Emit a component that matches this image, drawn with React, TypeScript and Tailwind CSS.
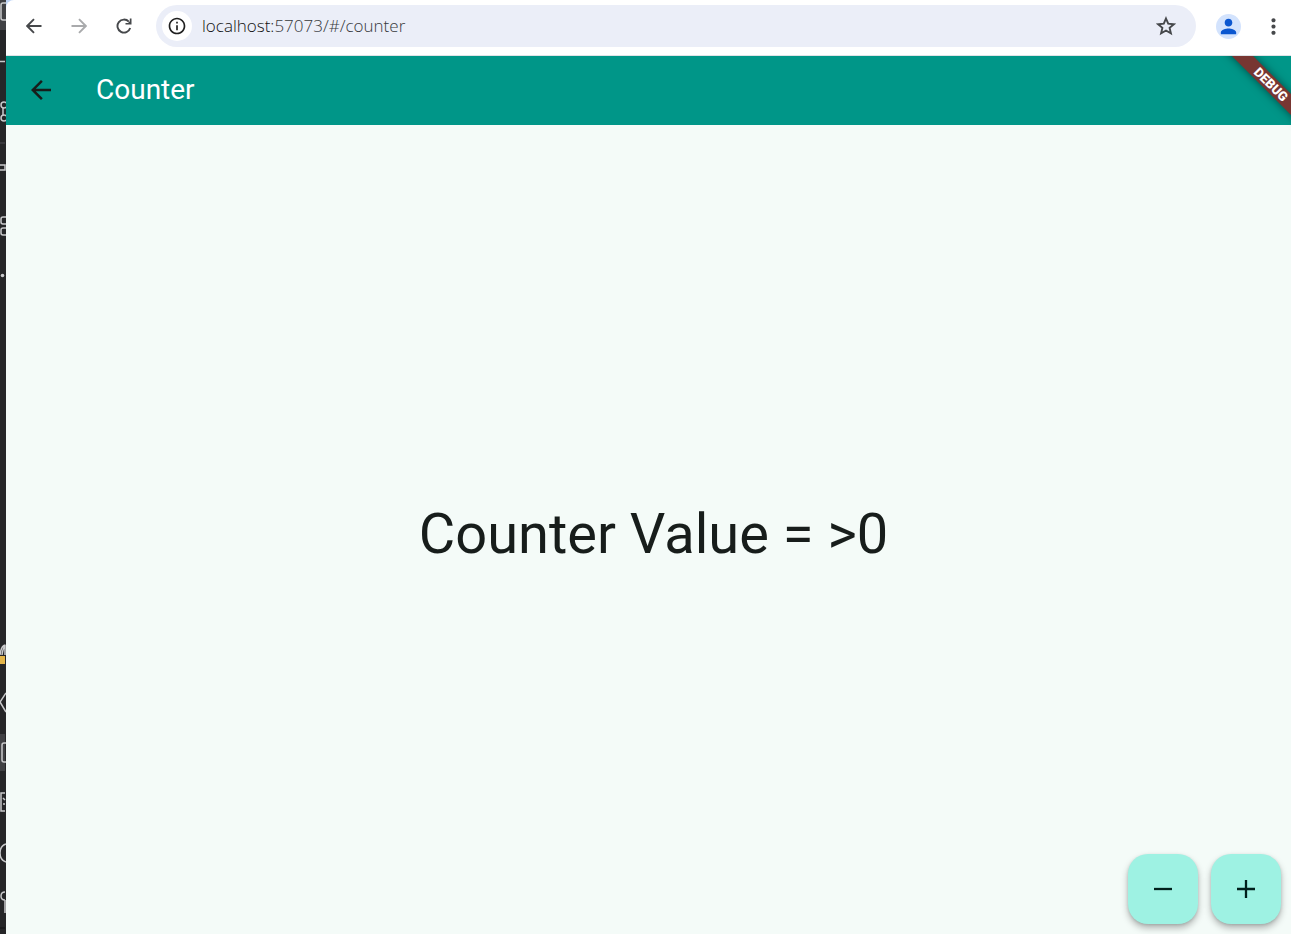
import { useState } from "react";
import { MdArrowBack, MdInfoOutline, MdMoreVert, MdPerson } from "react-icons/md";

function EditorStrip() {
  return (
    <aside className="flex w-1.5 shrink-0 flex-col justify-between overflow-hidden bg-[#252628]" aria-hidden="true">
      <svg width="6" height="290" viewBox="0 0 6 290" fill="none" stroke="#c9cacc" strokeWidth="1.5">
        <path d="M0 0h6v30H0z" fill="#404144" stroke="none" />
        <path d="M6 3H3Q1 3 1 5V18Q1 20 3 20H6M0 61.5H5" />
        <circle cx="4" cy="105" r="3" />
        <path d="M3 108V115" />
        <circle cx="4" cy="118" r="3" />
        <path d="M0 143H5" stroke="#404144" />
        <path d="M0 165H5V170H0M6 217H3Q1 217 1 219V222Q1 224 3 224H6M6 228H3Q1 228 1 230V233Q1 235 3 235H6" />
        <circle cx="2.5" cy="275.5" r="1.8" fill="#c9cacc" stroke="none" />
      </svg>
      <svg width="6" height="294" viewBox="0 0 6 294" fill="none" stroke="#c9cacc" strokeWidth="1.5">
        <path d="M0 15Q1 6 5 5M2 15Q3 8 5 6V15" />
        <path d="M0 16h5v8H0z" fill="#e3b549" stroke="none" />
        <path d="M6 53L0 62L6 72" />
        <path d="M0 94h5v37H0z" fill="#404144" stroke="none" />
        <path d="M6 103H4Q2 103 2 105V120Q2 122 4 122H6" />
        <path d="M5 153H1V171H5M3 158L5 160M3 164H5" />
        <path d="M6 204Q0 206 0 213T6 222M5 252Q1 252 1 256T5 260M5 260V273" />
        <path d="M0 288H5" stroke="#17181a" />
      </svg>
    </aside>
  );
}

function NavArrow({ forward = false }: { forward?: boolean }) {
  return (
    <svg width="16" height="16" viewBox="0 0 16 16" fill="none" stroke="currentColor" strokeWidth="1.9">
      {forward ? <path d="M0.5 8H14.5M8 1.2L14.8 8L8 14.8" /> : <path d="M15.5 8H1.5M8 1.2L1.2 8L8 14.8" />}
    </svg>
  );
}

function ReloadIcon() {
  return (
    <svg width="16" height="16" viewBox="0 0 16 16" fill="none" stroke="currentColor" strokeWidth="1.9">
      <path d="M14.2 10A6.5 6.5 0 1 1 12.8 3.7" />
      <path d="M15.5 0.5V6.5H9.5V4.9H12L13.8 3.2V0.5Z" fill="currentColor" stroke="none" />
    </svg>
  );
}

function StarIcon() {
  return (
    <svg width="20" height="20" viewBox="0 0 20 20" fill="none" stroke="currentColor" strokeWidth="1.9">
      <path d="M10 2.5L12.2 7.7L17.9 8.2L13.6 11.9L14.9 17.4L10 14.5L5.1 17.4L6.4 11.9L2.1 8.2L7.8 7.7Z" />
    </svg>
  );
}

function BrowserBar() {
  return (
    <header className="flex h-14 shrink-0 items-center rounded-tl-lg border-b border-[#dfe3e7] bg-white pr-1.5 pb-[3px] text-[#46484b]">
      <div className="flex w-[150px] shrink-0 items-center gap-[21px] pl-4">
        <button aria-label="Back" className="flex size-6 items-center justify-center"><NavArrow /></button>
        <button aria-label="Forward" disabled className="flex size-6 items-center justify-center text-[#a9aaac]"><NavArrow forward /></button>
        <button aria-label="Reload" className="flex size-6 items-center justify-center"><ReloadIcon /></button>
      </div>
      <div className="flex h-[42px] min-w-0 grow items-center rounded-full bg-[#ebeef8] pl-1.5 pr-5">
        <button aria-label="Site information" className="flex size-[30px] shrink-0 items-center justify-center rounded-full bg-white text-[#1f1f1f]">
          <MdInfoOutline size={20} />
        </button>
        <a href="#/counter" className="min-w-0 grow truncate pl-2.5 font-['Open_Sans',sans-serif] text-[17px] leading-6 font-light text-[#36383b]">
          <span className="text-[#111111]">localhost:</span>57073/#/counter
        </a>
        <button aria-label="Bookmark this page" className="shrink-0"><StarIcon /></button>
      </div>
      <div className="flex shrink-0 items-center gap-5 pl-5">
        <button aria-label="Profile" className="flex size-[25px] items-center justify-center rounded-full bg-[#d3e3fd] text-[#0b57d0]"><MdPerson size={23} /></button>
        <button aria-label="Browser menu" className="flex size-6 items-center justify-center"><MdMoreVert size={25} className="shrink-0" /></button>
      </div>
    </header>
  );
}

function SignIcon({ plus = false }: { plus?: boolean }) {
  return (
    <svg width="18" height="18" viewBox="0 0 18 18" fill="none" stroke="currentColor" strokeWidth="2.3">
      <path d={plus ? "M0 9H18M9 0V18" : "M0 9H18"} />
    </svg>
  );
}

const fab = "flex size-[70px] items-center justify-center rounded-[20px] bg-[#9ef2e3] text-[#00201c] shadow-[0_4px_7px_rgba(0,0,0,0.28),0_1px_3px_rgba(0,0,0,0.12)]";

export default function App() {
  const [count, setCount] = useState(0);
  return (
    <div className="flex min-h-screen bg-[#252628] font-[Roboto,sans-serif]">
      <EditorStrip />
      <div className="flex min-w-0 grow flex-col bg-[#c2d7f7]">
        <BrowserBar />
        <div className="relative flex grow flex-col overflow-hidden bg-[#f4fbf8]">
          <div className="flex h-[69px] shrink-0 items-center gap-10 bg-[#009688] pb-0.5 pl-5 text-[#171d1b]">
            <button aria-label="Back to home" className="flex items-center justify-center"><MdArrowBack size={30} /></button>
            <h1 className="text-[28px] leading-9 text-white">Counter</h1>
          </div>
          <main className="flex grow items-center justify-center pl-2.5 pt-2.5">
            <p className="text-[56px] leading-[65px] text-[#171d1b]">Counter Value = &gt;{count}</p>
          </main>
          <div className="absolute bottom-2.5 right-2.5 flex gap-[13px]">
            <button aria-label="Decrement" className={fab} onClick={() => setCount(count - 1)}><SignIcon /></button>
            <button aria-label="Increment" className={fab} onClick={() => setCount(count + 1)}><SignIcon plus /></button>
          </div>
          <div className="absolute -right-10 top-[21px] flex h-[15px] w-[120px] rotate-45 items-center justify-center bg-[#773632] text-[13px] leading-[15px] font-black text-white shadow-[0_0_8px_rgba(0,0,0,0.5)]">
            DEBUG
          </div>
        </div>
      </div>
    </div>
  );
}
